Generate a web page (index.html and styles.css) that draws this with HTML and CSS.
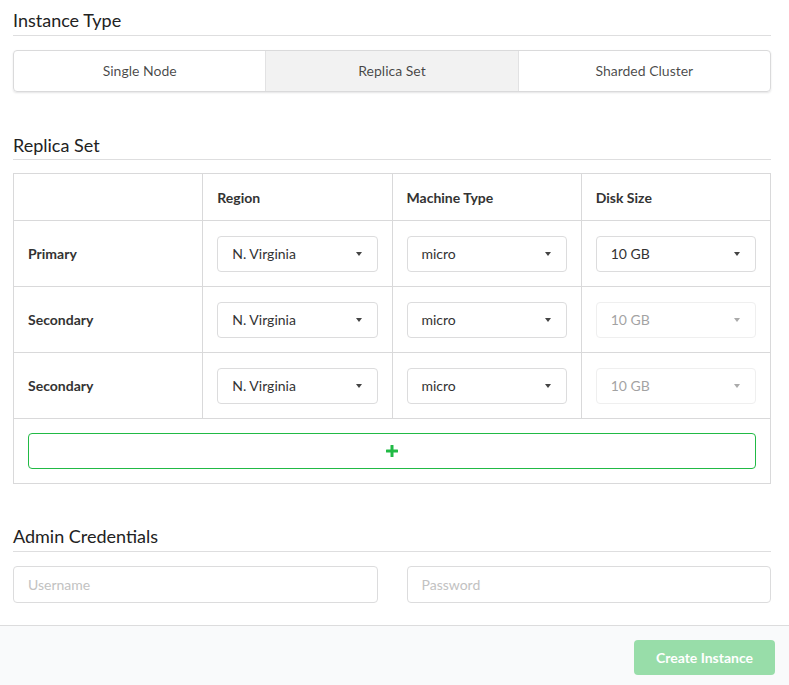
FILE: index.html
```html
<!DOCTYPE html>
<html>
<head>
<meta charset="utf-8">
<link rel="stylesheet" href="styles.css">
</head>
<body>
<div class="content">
  <h2 class="heading first">Instance Type</h2>
  <div class="segmented">
    <div class="seg">Single Node</div>
    <div class="seg active">Replica Set</div>
    <div class="seg">Sharded Cluster</div>
  </div>

  <h2 class="heading">Replica Set</h2>
  <table class="grid">
    <thead>
      <tr><th></th><th>Region</th><th>Machine Type</th><th>Disk Size</th></tr>
    </thead>
    <tbody>
      <tr>
        <td class="label">Primary</td>
        <td><div class="select"><span>N. Virginia</span><i class="caret"></i></div></td>
        <td><div class="select"><span>micro</span><i class="caret"></i></div></td>
        <td><div class="select"><span>10 GB</span><i class="caret"></i></div></td>
      </tr>
      <tr>
        <td class="label">Secondary</td>
        <td><div class="select"><span>N. Virginia</span><i class="caret"></i></div></td>
        <td><div class="select"><span>micro</span><i class="caret"></i></div></td>
        <td><div class="select disabled"><span>10 GB</span><i class="caret"></i></div></td>
      </tr>
      <tr>
        <td class="label">Secondary</td>
        <td><div class="select"><span>N. Virginia</span><i class="caret"></i></div></td>
        <td><div class="select"><span>micro</span><i class="caret"></i></div></td>
        <td><div class="select disabled"><span>10 GB</span><i class="caret"></i></div></td>
      </tr>
    </tbody>
    <tfoot>
      <tr><td colspan="4">
        <div class="add">
          <svg width="12" height="12" viewBox="0 0 12 12"><rect x="4.5" y="0" width="3" height="12" rx="0.5" fill="#21ba45"/><rect x="0" y="4.5" width="12" height="3" rx="0.5" fill="#21ba45"/></svg>
        </div>
      </td></tr>
    </tfoot>
  </table>

  <h2 class="heading admin">Admin Credentials</h2>
  <div class="creds">
    <div class="input placeholder">Username</div>
    <div class="input placeholder">Password</div>
  </div>
</div>
<div class="actions">
  <div class="create">Create Instance</div>
</div>
</body>
</html>
```
FILE: styles.css
```css
html, body {
  margin: 0;
  padding: 0;
  background: #fff;
  font-family: Lato, "Open Sans", sans-serif;
  color: rgba(0,0,0,0.87);
  overflow: hidden;
}
.content {
  padding: 0 18px 22px 13px;
}
.heading {
  margin: 41px 0 0 0;
  font-size: 18px;
  font-weight: 400;
  line-height: 24px;
  padding-bottom: 2px;
  border-bottom: 1px solid #dededf;
  color: #222;
}
.heading.first {
  margin-top: 0;
  padding-top: 8px;
  padding-bottom: 3px;
}
.heading.admin {
  margin-top: 40px;
  padding-bottom: 3px;
}
.segmented {
  margin-top: 14px;
  display: flex;
  border: 1px solid #dadadb;
  border-radius: 4px;
  box-shadow: 0 1px 2px 0 rgba(34,36,38,0.12);
  overflow: hidden;
  height: 40px;
}
.seg {
  flex: 1;
  display: flex;
  align-items: center;
  justify-content: center;
  font-size: 14px;
  color: rgba(0,0,0,0.72);
  padding-bottom: 1px;
}
.seg + .seg { border-left: 1px solid #e2e2e3; }
.seg.active { background: #f2f2f2; }

.grid {
  margin-top: 13px;
  width: 100%;
  border-collapse: collapse;
  table-layout: fixed;
  border: 1px solid #d9d9da;
}
.grid th, .grid td {
  border: 1px solid #d9d9da;
  padding: 0 14px;
  text-align: left;
  font-size: 14px;
}
.grid th {
  height: 46px;
  font-weight: 700;
  color: #333;
}
.grid tbody td {
  height: 65px;
  padding: 0 14px;
}
.grid td.label {
  font-weight: 700;
  color: #333;
}
.grid tfoot td {
  height: 64px;
}
.select {
  box-sizing: border-box;
  height: 36px;
  border: 1px solid #dcdcdd;
  border-radius: 4px;
  display: flex;
  align-items: center;
  justify-content: space-between;
  padding: 0 15px 0 14px;
  color: #333;
  font-size: 14px;
}
.select.disabled { opacity: 0.45; }
.caret {
  width: 0; height: 0;
  border-left: 3.5px solid transparent;
  border-right: 3.5px solid transparent;
  border-top: 4px solid #444;
}
.add {
  box-sizing: border-box;
  height: 36px;
  border: 1px solid #21ba45;
  border-radius: 4px;
  display: flex;
  align-items: center;
  justify-content: center;
}
.add svg { display: block; }

.creds {
  margin-top: 14px;
  display: grid;
  grid-template-columns: 1fr 1fr;
  column-gap: 29px;
}
.input {
  box-sizing: border-box;
  height: 37px;
  border: 1px solid #dcdcdd;
  border-radius: 4px;
  padding: 0 14px;
  display: flex;
  align-items: center;
  font-size: 14px;
}
.placeholder { color: #c2c2c2; }

.actions {
  border-top: 1px solid #dcdcdd;
  background: #f9fafb;
  padding: 14px 14px 14px 0;
  display: flex;
  justify-content: flex-end;
}
.create {
  width: 141px;
  height: 35px;
  border-radius: 4px;
  background: #98dda9;
  color: #fff;
  font-weight: 700;
  font-size: 14px;
  display: flex;
  align-items: center;
  justify-content: center;
}
```
